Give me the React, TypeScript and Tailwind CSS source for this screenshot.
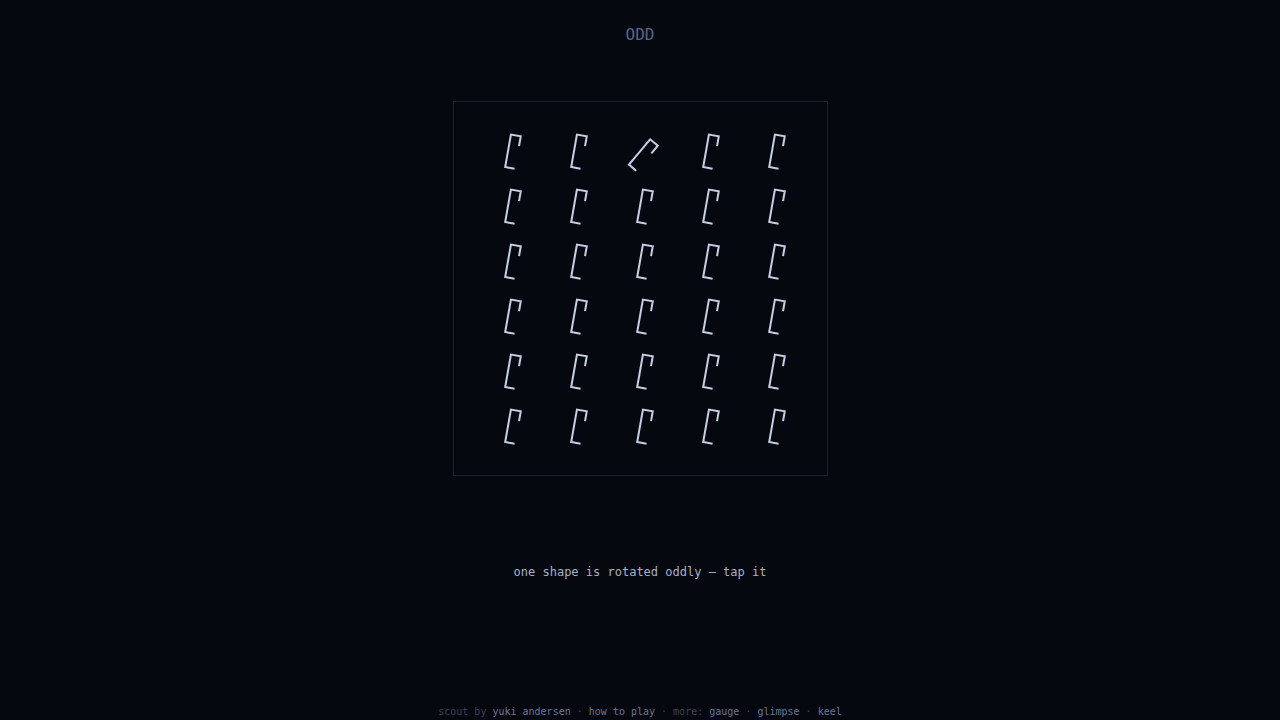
import React from "react";

const COLS = 5;
const ROWS = 6;
const ODD_INDEX = 2;

// unrotated glyph, centred on the origin
const GLYPH = "M6 -7.5 L6 -16.5 L-4 -16.5 L-4 16.5 L4.5 16.5";

function Glyph({ odd }: { odd: boolean }) {
  const transform = odd ? "translate(2.6 3) rotate(40)" : "translate(4 0) rotate(10)";
  return (
    <svg width="66" height="55" viewBox="-33 -27.5 66 55" className="block">
      <g transform={transform}>
        <path
          d={GLYPH}
          fill="none"
          stroke="#c6d0e4"
          strokeWidth="2"
          strokeLinejoin="miter"
          strokeLinecap="square"
        />
      </g>
    </svg>
  );
}

export default function App() {
  const cells = Array.from({ length: COLS * ROWS }, (_, i) => i);

  return (
    <div
      className="min-h-screen w-full flex flex-col items-center bg-[#060810] text-[#a3abc2]"
      style={{ fontFamily: '"DejaVu Sans Mono", "Liberation Mono", monospace' }}
    >
      <h1 className="mt-[23px] h-6 leading-6 text-[16px] text-[#5b6687]">ODD</h1>

      <div className="mt-[54px] w-[375px] h-[375px] border border-[#1b1f2e] flex items-center justify-center">
        <div className="grid grid-cols-5">
          {cells.map((i) => (
            <button key={i} className="w-[66px] h-[55px] cursor-pointer">
              <Glyph odd={i === ODD_INDEX} />
            </button>
          ))}
        </div>
      </div>

      <p className="mt-[87px] h-[18px] leading-[18px] text-[12px] text-[#a8b0c6]">
        one shape is rotated oddly — tap it
      </p>

      <div className="flex-1" />

      <footer className="pb-[4px] h-4 leading-4 text-[10px] text-[#3b4254]">
        scout by <span className="text-[#6a7594]">yuki andersen</span> ·{" "}
        <span className="text-[#6a7594]">how to play</span> · more:{" "}
        <span className="text-[#6a7594]">gauge</span> ·{" "}
        <span className="text-[#6a7594]">glimpse</span> ·{" "}
        <span className="text-[#6a7594]">keel</span>
      </footer>
    </div>
  );
}
